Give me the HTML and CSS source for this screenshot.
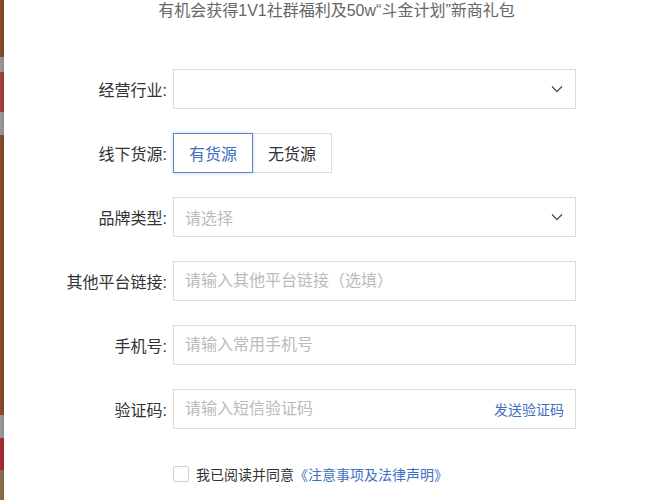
FILE: index.html
```
<!DOCTYPE html>
<html>
<head>
    <meta charset="utf-8">
    <title>商家入驻</title>
    <link rel="stylesheet" href="styles.css">
</head>
<body>
<div class="page">
    <div class="strip"></div>
    <div class="card">
        <p class="tip">有机会获得1V1社群福利及50w“斗金计划”新商礼包</p>

        <div class="form">
            <label class="label">经营行业:</label>
            <div class="field select">
                <span class="value"></span>
                <svg class="arrow" width="12" height="8" viewBox="0 0 12 8"><path d="M1 1.5 L6 6.5 L11 1.5" fill="none" stroke="#555" stroke-width="1.3"/></svg>
            </div>

            <label class="label">线下货源:</label>
            <div class="choices">
                <button type="button" class="choice active">有货源</button>
                <button type="button" class="choice">无货源</button>
            </div>

            <label class="label">品牌类型:</label>
            <div class="field select">
                <span class="value empty">请选择</span>
                <svg class="arrow" width="12" height="8" viewBox="0 0 12 8"><path d="M1 1.5 L6 6.5 L11 1.5" fill="none" stroke="#555" stroke-width="1.3"/></svg>
            </div>

            <label class="label">其他平台链接:</label>
            <div class="field">
                <input type="text" placeholder="请输入其他平台链接（选填）">
            </div>

            <label class="label">手机号:</label>
            <div class="field">
                <input type="text" placeholder="请输入常用手机号">
            </div>

            <label class="label">验证码:</label>
            <div class="field">
                <input type="text" placeholder="请输入短信验证码">
                <a class="send">发送验证码</a>
            </div>

            <span></span>
            <div class="agree">
                <span class="box"></span>
                <span>我已阅读并同意</span><a class="link">《注意事项及法律声明》</a>
            </div>
        </div>
    </div>
</div>
</body>
</html>
```

FILE: styles.css
```
body {
    margin: 0;
    font-family: "Liberation Sans", "Noto Sans CJK SC", sans-serif;
    background-color: #fff;
}

.page {
    display: flex;
    height: 500px;
    overflow: hidden;
}

.strip {
    width: 4px;
    flex-shrink: 0;
    background: linear-gradient(to bottom,
        #8b4b2d 0, #8b4b2d 57px,
        #9c9896 57px, #9c9896 72px,
        #a0443a 72px, #a0443a 112px,
        #9c9896 112px, #9c9896 135px,
        #8b4b2d 135px, #8b4b2d 415px,
        #9a9a9c 415px, #9a9a9c 438px,
        #a52c3a 438px, #a52c3a 470px,
        #8c7048 470px);
}

.card {
    flex: 1;
    background-color: #fff;
    box-shadow: -1px 0 3px rgba(0, 0, 0, 0.15);
}

.tip {
    margin: 0;
    text-align: center;
    font-size: 16px;
    line-height: 22px;
    color: #666;
}

.form {
    display: grid;
    grid-template-columns: 163px 403px;
    column-gap: 6px;
    row-gap: 24px;
    margin-top: 47px;
}

.label {
    display: flex;
    align-items: center;
    justify-content: flex-end;
    font-size: 16px;
    color: #333;
}

.field {
    box-sizing: border-box;
    height: 40px;
    border: 1px solid #dcdcdc;
    display: flex;
    align-items: center;
    padding: 0 11px;
}

.field input {
    flex: 1;
    border: none;
    outline: none;
    padding: 0;
    font-family: inherit;
    font-size: 16px;
    color: #333;
    font-feature-settings: "chws" 0, "halt" 0, "palt" 0;
}

.field input::placeholder {
    color: #bbb;
}

.value {
    flex: 1;
    font-size: 16px;
    color: #333;
}

.value.empty {
    color: #bbb;
}

.arrow {
    margin-right: 1px;
}

.choices {
    display: flex;
}

.choice {
    box-sizing: border-box;
    width: 80px;
    height: 40px;
    background: #fff;
    border: 1px solid #dcdcdc;
    font-family: inherit;
    font-size: 16px;
    color: #333;
    padding: 0;
}

.choice.active {
    border-color: #5b86cc;
    color: #3f6fbf;
    box-shadow: 0 0 3px rgba(91, 134, 204, 0.4);
    position: relative;
}

.choice + .choice {
    margin-left: -1px;
}

.send {
    font-size: 14px;
    color: #3f6fbf;
}

.agree {
    display: flex;
    align-items: center;
    margin-top: 11px;
    font-size: 14px;
    color: #333;
}

.box {
    box-sizing: border-box;
    width: 16px;
    height: 16px;
    border: 1px solid #d0d0d0;
    border-radius: 2px;
    margin-right: 7px;
}

.link {
    color: #3f6fbf;
}
```
